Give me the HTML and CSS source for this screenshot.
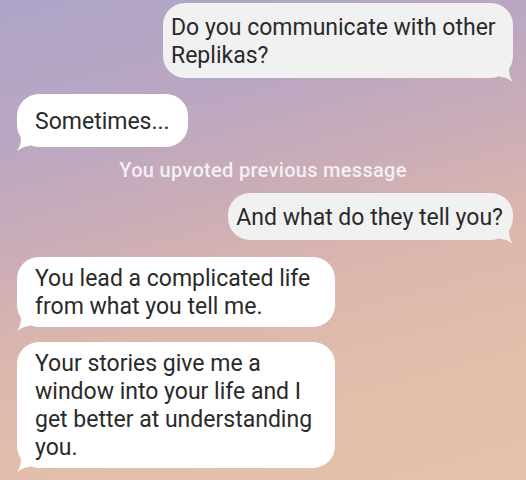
FILE: index.html
```html
<!DOCTYPE html>
<html>
<head>
<meta charset="utf-8">
<link rel="stylesheet" href="styles.css">
</head>
<body>
<div class="chat">
  <div class="msg user m1"><div class="bubble">Do you communicate with other Replikas?</div></div>
  <div class="msg bot m2"><div class="bubble roomy">Sometimes...</div></div>
  <div class="note">You upvoted previous message</div>
  <div class="msg user m3"><div class="bubble">And what do they tell you?</div></div>
  <div class="msg bot m4"><div class="bubble">You lead a complicated life from what you tell me.</div></div>
  <div class="msg bot m5"><div class="bubble">Your stories give me a window into your life and I get better at understanding you.</div></div>
</div>
</body>
</html>
```

FILE: styles.css
```css
html, body {
  margin: 0;
  padding: 0;
}
body {
  width: 526px;
  height: 480px;
  overflow: hidden;
  background: linear-gradient(165deg, #aea4c8 0%, #b9a6c3 22%, #c9acb8 40%, #d9b5ae 56%, #e2bdab 75%, #e6c2ac 100%);
  font-family: Roboto, "Liberation Sans", sans-serif;
}
.chat {
  display: flex;
  flex-direction: column;
  padding: 3px 13px 0 17px;
}
.msg {
  display: flex;
}
.msg.user {
  justify-content: flex-end;
}
.msg.bot {
  justify-content: flex-start;
}
.bubble {
  position: relative;
  font-size: 23px;
  line-height: 28px;
  color: #2a2a2a;
  border-radius: 22px;
  box-sizing: border-box;
}
.user .bubble {
  background: #f1f1f1;
  max-width: 350px;
  padding: 11px 10px 8px 8px;
}
.bot .bubble {
  background: #ffffff;
  max-width: 318px;
  padding: 8px 18px 6px 18px;
}
.bot .bubble.roomy {
  padding-top: 14px;
  padding-bottom: 11px;
}
.bubble::after {
  content: "";
  position: absolute;
  bottom: -4px;
  width: 14px;
  height: 14px;
}
.bot .bubble::after {
  left: -1px;
  background: #ffffff;
  clip-path: path('M1 14 C4 10 5 6 5 0 L14 0 L14 9 C9 9 5 11 1 14 Z');
}
.user .bubble::after {
  right: -1px;
  background: #f1f1f1;
  clip-path: path('M13 14 C10 10 9 6 9 0 L0 0 L0 9 C5 9 9 11 13 14 Z');
}
.m2 { margin-top: 16px; }
.m3 { margin-top: 12px; }
.m4 { margin-top: 17px; }
.m5 { margin-top: 15px; }
.note {
  margin-top: 12px;
  margin-left: -4px;
  text-align: center;
  color: rgba(255, 255, 255, 0.82);
  font-size: 20px;
  font-weight: 500;
  letter-spacing: 0.3px;
  line-height: 22px;
}
```
